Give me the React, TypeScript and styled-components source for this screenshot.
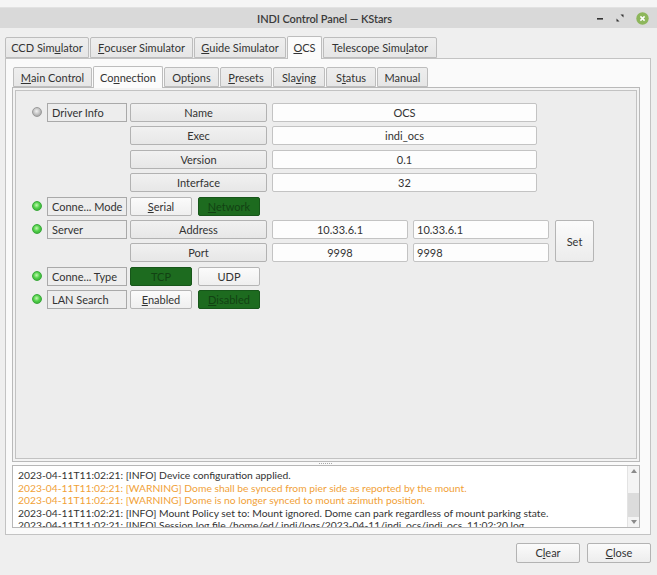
import React from 'react';
import styled, { createGlobalStyle } from 'styled-components';

const GlobalStyle = createGlobalStyle`
  html, body {
    margin: 0;
    padding: 0;
  }
  body {
    background: #efefef;
    font-family: Lato, "Noto Sans", sans-serif;
    font-size: 11px;
    color: #333;
  }
`;

const Window = styled.div`
  width: 657px;
  height: 575px;
  display: flex;
  flex-direction: column;
  overflow: hidden;
`;

const TopStrip = styled.div`
  height: 7px;
  background: #f5f5f5;
  border-bottom: 1px solid #e2e2e2;
`;

const TitleBar = styled.div`
  height: 20px;
  background: #d9d9d9;
  display: grid;
  grid-template-columns: 1fr auto 1fr;
  align-items: center;
  padding-right: 8px;
`;

const TitleText = styled.div`
  grid-column: 2;
  font-size: 11px;
  font-weight: 600;
  letter-spacing: -0.1px;
  color: #3b3b3b;
`;

const TitleControls = styled.div`
  justify-self: end;
  display: flex;
  align-items: center;
  gap: 12px;
`;

const Main = styled.div`
  display: flex;
  flex-direction: column;
  padding: 7px 6px 0 5px;
`;

const TabBar = styled.div<{ $h: number }>`
  display: flex;
  align-items: flex-end;
  height: ${(p) => p.$h}px;
  gap: 1px;
  position: relative;
  z-index: 1;
`;

const Tab = styled.div<{ $w: number; $active?: boolean; $h: number }>`
  box-sizing: border-box;
  width: ${(p) => p.$w}px;
  height: ${(p) => (p.$active ? p.$h + 2 : p.$h)}px;
  margin-bottom: ${(p) => (p.$active ? -1 : 0)}px;
  border: 1px solid #bdbdbd;
  border-bottom: ${(p) => (p.$active ? 'none' : '1px solid #bdbdbd')};
  border-radius: 2px 2px 0 0;
  background: ${(p) =>
    p.$active ? '#fbfbfb' : 'linear-gradient(#eeeeee, #e6e6e6)'};
  display: flex;
  align-items: center;
  justify-content: center;
  padding-bottom: ${(p) => (p.$active ? 1 : 0)}px;
  white-space: nowrap;
  color: #333;
`;

const Mn = styled.span`
  text-decoration: underline;
`;

const OuterPane = styled.div`
  box-sizing: border-box;
  height: 477px;
  border: 1px solid #c3c3c3;
  background: #fafafa;
  padding: 7px 10px 6px 6px;
  display: flex;
  flex-direction: column;
`;

const InnerTabs = styled.div`
  margin-left: 1px;
`;

const InnerPane = styled.div`
  box-sizing: border-box;
  height: 375px;
  border: 1px solid #b9b9b9;
  padding: 2px;
  background: #f3f3f3;
  display: flex;
`;

const ScrollArea = styled.div`
  flex: 1;
  border: 1px solid #c2c2c2;
  background: #ededed;
  padding: 12px 0 0 16px;
  display: flex;
  flex-direction: column;
  gap: 4.4px;
`;

const Property = styled.div`
  display: flex;
  align-items: flex-start;
`;

const Led = styled.span<{ $on?: boolean }>`
  width: 10px;
  height: 10px;
  border-radius: 50%;
  margin: 4px 5px 0 0;
  flex: none;
  box-sizing: border-box;
  background: ${(p) =>
    p.$on
      ? 'radial-gradient(circle at 45% 40%, #c6f7b4 0%, #52d24a 45%, #2f9f2f 100%)'
      : 'radial-gradient(circle at 45% 40%, #f2f2f2 0%, #bcbcbc 55%, #8f8f8f 100%)'};
  border: 1px solid ${(p) => (p.$on ? '#3aa93a' : '#9a9a9a')};
`;

const PropLabel = styled.div`
  box-sizing: border-box;
  width: 80px;
  height: 19px;
  border: 1px solid #a9a9a9;
  padding-left: 4px;
  line-height: 17px;
  margin-right: 3px;
  white-space: nowrap;
  overflow: hidden;
`;

const Elements = styled.div`
  display: flex;
  flex-direction: column;
  gap: 4.4px;
`;

const ElemRow = styled.div<{ $gap?: number }>`
  display: flex;
  gap: ${(p) => p.$gap ?? 5}px;
`;

const ElemName = styled.div`
  box-sizing: border-box;
  width: 137px;
  height: 19px;
  border: 1px solid #b2b2b2;
  border-radius: 2px;
  background: linear-gradient(#f1f1f1, #e7e7e7);
  text-align: center;
  line-height: 17px;
`;

const Value = styled.div<{ $w: number; $left?: boolean }>`
  box-sizing: border-box;
  width: ${(p) => p.$w}px;
  height: 19px;
  border: 1px solid #c3c3c3;
  border-radius: 2px;
  background: #fdfdfd;
  text-align: ${(p) => (p.$left ? 'left' : 'center')};
  padding-left: ${(p) => (p.$left ? 3 : 0)}px;
  line-height: 17px;
`;

const SwitchButton = styled.div<{ $on?: boolean }>`
  box-sizing: border-box;
  width: 62px;
  height: 19px;
  border-radius: 2px;
  border: 1px solid ${(p) => (p.$on ? '#17561a' : '#b5b5b5')};
  background: ${(p) => (p.$on ? '#1d6b1f' : 'linear-gradient(#fbfbfb, #efefef)')};
  color: ${(p) => (p.$on ? '#124213' : '#333')};
  text-align: center;
  line-height: 17px;
`;

const SetButton = styled.div`
  box-sizing: border-box;
  width: 39px;
  margin-left: 6px;
  align-self: stretch;
  border: 1px solid #b5b5b5;
  border-radius: 2px;
  background: linear-gradient(#fbfbfb, #ececec);
  display: flex;
  align-items: center;
  justify-content: center;
`;

const Splitter = styled.div`
  height: 3px;
  display: flex;
  justify-content: center;
  align-items: center;
`;

const SplitterDots = styled.span`
  width: 14px;
  height: 1px;
  background: repeating-linear-gradient(90deg, #a9a9a9 0 1px, transparent 1px 2px);
`;

const LogBox = styled.div`
  box-sizing: border-box;
  height: 63px;
  border: 1px solid #b7b7b7;
  background: #fff;
  display: flex;
  overflow: hidden;
`;

const LogText = styled.div`
  flex: 1;
  padding: 3px 0 0 5px;
  font-size: 10.3px;
  line-height: 12.6px;
  overflow: hidden;
  white-space: nowrap;
`;

const LogLine = styled.div<{ $warn?: boolean }>`
  color: ${(p) => (p.$warn ? '#f1a137' : '#333')};
`;

const ScrollBar = styled.div`
  width: 11px;
  background: #f4f4f4;
  border-left: 1px solid #e3e3e3;
  display: flex;
  flex-direction: column;
  align-items: center;
`;

const ScrollArrow = styled.div`
  height: 10px;
  display: flex;
  align-items: center;
  justify-content: center;
`;

const ScrollTrack = styled.div`
  flex: 1;
  width: 100%;
  display: flex;
  flex-direction: column;
  justify-content: flex-end;
`;

const ScrollHandle = styled.div`
  height: 24px;
  background: #dcdcdc;
`;

const ButtonRow = styled.div`
  display: flex;
  justify-content: flex-end;
  gap: 7px;
  margin-top: 8px;
`;

const DialogButton = styled.div`
  box-sizing: border-box;
  width: 64px;
  height: 20px;
  border: 1px solid #b3b3b3;
  border-radius: 2px;
  background: linear-gradient(#fbfbfb, #ededed);
  text-align: center;
  line-height: 18px;
`;

const logLines = [
  { text: '2023-04-11T11:02:21: [INFO] Device configuration applied.' },
  {
    text: '2023-04-11T11:02:21: [WARNING] Dome shall be synced from pier side as reported by the mount.',
    warn: true,
  },
  {
    text: '2023-04-11T11:02:21: [WARNING] Dome is no longer synced to mount azimuth position.',
    warn: true,
  },
  {
    text: '2023-04-11T11:02:21: [INFO] Mount Policy set to: Mount ignored. Dome can park regardless of mount parking state.',
  },
  {
    text: '2023-04-11T11:02:21: [INFO] Session log file /home/ed/.indi/logs/2023-04-11/indi_ocs/indi_ocs_11:02:20.log',
  },
];

const driverInfo = [
  ['Name', 'OCS'],
  ['Exec', 'indi_ocs'],
  ['Version', '0.1'],
  ['Interface', '32'],
];

const App = (): JSX.Element => {
  return (
    <Window>
      <GlobalStyle />
      <TopStrip />
      <TitleBar>
        <TitleText>INDI Control Panel — KStars</TitleText>
        <TitleControls>
          <svg width="8" height="8" viewBox="0 0 8 8">
            <rect x="1" y="4" width="6" height="1.6" fill="#333" />
          </svg>
          <svg width="8" height="8" viewBox="0 0 8 8">
            <path d="M4.5 0.5 H7.5 V3.5 Z" fill="#333" />
            <path d="M0.5 4.5 V7.5 H3.5 Z" fill="#333" />
          </svg>
          <svg width="13" height="13" viewBox="0 0 13 13">
            <circle cx="6.5" cy="6.5" r="6.2" fill="#8db65b" />
            <path d="M4.4 4.4 L8.6 8.6 M8.6 4.4 L4.4 8.6" stroke="#fff" strokeWidth="1.5" />
          </svg>
        </TitleControls>
      </TitleBar>
      <Main>
        <TabBar $h={23}>
          <Tab $w={84} $h={21}>
            CCD Sim<Mn>u</Mn>lator
          </Tab>
          <Tab $w={103} $h={21}>
            <Mn>F</Mn>ocuser Simulator
          </Tab>
          <Tab $w={92} $h={21}>
            <Mn>G</Mn>uide Simulator
          </Tab>
          <Tab $w={35} $h={21} $active>
            <Mn>O</Mn>CS
          </Tab>
          <Tab $w={114} $h={21}>
            Telescope Simu<Mn>l</Mn>ator
          </Tab>
        </TabBar>
        <OuterPane>
          <InnerTabs>
            <TabBar $h={21}>
              <Tab $w={79} $h={20}>
                <Mn>M</Mn>ain Control
              </Tab>
              <Tab $w={70} $h={20} $active>
                Co<Mn>n</Mn>nection
              </Tab>
              <Tab $w={55} $h={20}>
                Opt<Mn>i</Mn>ons
              </Tab>
              <Tab $w={52} $h={20}>
                <Mn>P</Mn>resets
              </Tab>
              <Tab $w={52} $h={20}>
                Sla<Mn>v</Mn>ing
              </Tab>
              <Tab $w={50} $h={20}>
                S<Mn>t</Mn>atus
              </Tab>
              <Tab $w={51} $h={20}>
                Manual
              </Tab>
            </TabBar>
          </InnerTabs>
          <InnerPane>
            <ScrollArea>
              <Property>
                <Led />
                <PropLabel>Driver Info</PropLabel>
                <Elements>
                  {driverInfo.map(([name, value]) => (
                    <ElemRow key={name}>
                      <ElemName>{name}</ElemName>
                      <Value $w={265}>{value}</Value>
                    </ElemRow>
                  ))}
                </Elements>
              </Property>
              <Property>
                <Led $on />
                <PropLabel>Conne... Mode</PropLabel>
                <ElemRow $gap={6}>
                  <SwitchButton>
                    <Mn>S</Mn>erial
                  </SwitchButton>
                  <SwitchButton $on>
                    <Mn>N</Mn>etwork
                  </SwitchButton>
                </ElemRow>
              </Property>
              <Property>
                <Led $on />
                <PropLabel>Server</PropLabel>
                <Elements>
                  <ElemRow>
                    <ElemName>Address</ElemName>
                    <Value $w={136}>10.33.6.1</Value>
                    <Value $w={136} $left>
                      10.33.6.1
                    </Value>
                  </ElemRow>
                  <ElemRow>
                    <ElemName>Port</ElemName>
                    <Value $w={136}>9998</Value>
                    <Value $w={136} $left>
                      9998
                    </Value>
                  </ElemRow>
                </Elements>
                <SetButton>Set</SetButton>
              </Property>
              <Property>
                <Led $on />
                <PropLabel>Conne... Type</PropLabel>
                <ElemRow $gap={6}>
                  <SwitchButton $on>TCP</SwitchButton>
                  <SwitchButton>UDP</SwitchButton>
                </ElemRow>
              </Property>
              <Property>
                <Led $on />
                <PropLabel>LAN Search</PropLabel>
                <ElemRow $gap={6}>
                  <SwitchButton>
                    <Mn>E</Mn>nabled
                  </SwitchButton>
                  <SwitchButton $on>
                    <Mn>D</Mn>isabled
                  </SwitchButton>
                </ElemRow>
              </Property>
            </ScrollArea>
          </InnerPane>
          <Splitter>
            <SplitterDots />
          </Splitter>
          <LogBox>
            <LogText>
              {logLines.map((l, i) => (
                <LogLine key={i} $warn={l.warn}>
                  {l.text}
                </LogLine>
              ))}
            </LogText>
            <ScrollBar>
              <ScrollArrow>
                <svg width="6" height="4" viewBox="0 0 6 4">
                  <path d="M0 4 L3 0 L6 4 Z" fill="#8a8a8a" />
                </svg>
              </ScrollArrow>
              <ScrollTrack>
                <ScrollHandle />
              </ScrollTrack>
              <ScrollArrow>
                <svg width="6" height="4" viewBox="0 0 6 4">
                  <path d="M0 0 L3 4 L6 0 Z" fill="#8a8a8a" />
                </svg>
              </ScrollArrow>
            </ScrollBar>
          </LogBox>
        </OuterPane>
        <ButtonRow>
          <DialogButton>
            C<Mn>l</Mn>ear
          </DialogButton>
          <DialogButton>
            <Mn>C</Mn>lose
          </DialogButton>
        </ButtonRow>
      </Main>
    </Window>
  );
};

export default App;
